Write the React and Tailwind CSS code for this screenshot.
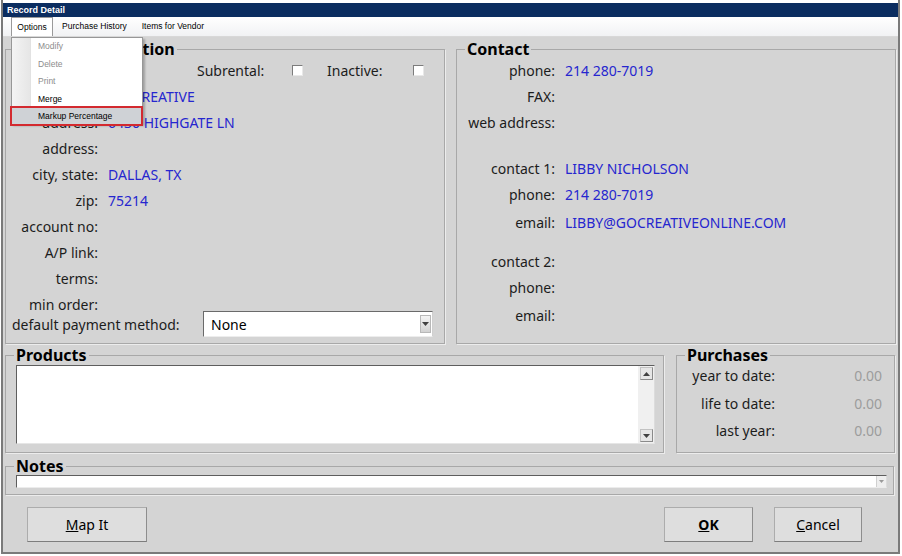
import React from 'react';

const blue = 'text-[#2626cf]';

const Check = () => (
  <span className="inline-block w-[11px] h-[11px] bg-white border border-t-[#7c7c7c] border-l-[#7c7c7c] border-r-[#e8e8e8] border-b-[#e8e8e8]" />
);

const LeftRow = ({ label, value }) => (
  <div className="flex h-[26px] items-center">
    <div className="w-[92px] text-right whitespace-nowrap">{label}</div>
    <div className={`ml-[10px] whitespace-nowrap ${blue}`}>{value}</div>
  </div>
);

const ContactRow = ({ label, value, h = 'h-[26px]', extra = '' }) => (
  <div className={`flex items-center ${h} ${extra}`}>
    <div className="w-[98px] text-right whitespace-nowrap">{label}</div>
    <div className={`ml-[10px] whitespace-nowrap ${blue}`}>{value}</div>
  </div>
);

const Group = ({ title, className, children }) => (
  <fieldset className={`border border-[#a8a8a8] shadow-[1px_1px_0_#ececec] ${className}`}>
    <legend className="ml-[8px] px-[2px] text-[16px] leading-[22px] font-bold text-black">{title}</legend>
    {children}
  </fieldset>
);

const Arrow = ({ down }) => (
  <svg width="7" height="4" viewBox="0 0 7 4">
    <path d={down ? 'M0 0h7L3.5 4z' : 'M0 4h7L3.5 0z'} fill="#404040" />
  </svg>
);

const Button = ({ children, className = '' }) => (
  <button className={`h-[35px] bg-[#dedede] border border-[#acacac] border-b-[#7d7d7d] border-r-[#8d8d8d] text-[14px] text-black ${className}`}>
    {children}
  </button>
);

export default function App() {
  return (
    <div className="relative w-[902px] h-[556px] bg-white overflow-hidden font-['Noto_Sans',sans-serif] text-[14px] text-[#1c1c1c]">
      <div className="ml-[1px] w-[899px] h-[554px] flex flex-col pt-[3px] border-x-2 border-b-2 border-[#7a7a7a]">
        {/* Title bar */}
        <div className="h-[14px] bg-[#0b2d60] flex items-center pl-[4px] text-white text-[9px] font-bold font-['Liberation_Sans',sans-serif] leading-none">
          Record Detail
        </div>

        {/* Menu bar */}
        <div className="h-[20px] bg-gradient-to-b from-white to-[#f1f2f4] border-b border-[#d8d8d8] flex items-stretch font-['Liberation_Sans',sans-serif] text-[8.5px] text-black">
          <div className="ml-[8px] w-[42px] bg-white border-x border-t border-[#9a9a9a] flex items-center justify-center">Options</div>
          <div className="ml-[9px] flex items-center">Purchase History</div>
          <div className="ml-[15px] flex items-center">Items for Vendor</div>
        </div>

        {/* Body */}
        <div className="flex-1 bg-[#d4d4d4] flex flex-col">
          <div className="flex mt-[1px]">
            <Group title="Vendor Information" className="ml-[2px] w-[440px] h-[306px]">
              <div className="-mt-[3px]">
                <div className="flex h-[26px] items-center">
                  <span className="ml-[191px] w-[95px]">Subrental:</span>
                  <Check />
                  <span className="ml-[24px] w-[86px]">Inactive:</span>
                  <Check />
                </div>
                <LeftRow label="name:" value="GO CREATIVE" />
                <LeftRow label="address:" value="6430 HIGHGATE LN" />
                <LeftRow label="address:" value="" />
                <LeftRow label="city, state:" value="DALLAS, TX" />
                <LeftRow label="zip:" value="75214" />
                <LeftRow label="account no:" value="" />
                <LeftRow label="A/P link:" value="" />
                <LeftRow label="terms:" value="" />
                <LeftRow label="min order:" value="" />
                <div className="flex h-[26px] items-center -mt-[6px]">
                  <span className="ml-[6px] w-[191px] whitespace-nowrap">default payment method:</span>
                  <div className="w-[230px] h-[26px] bg-white border border-t-[#6a6a6a] border-l-[#6a6a6a] border-r-[#cfcfcf] border-b-[#ededed] flex items-center">
                    <span className="ml-[7px] flex-1 text-black">None</span>
                    <div className="w-[11px] h-[18px] mr-[1px] bg-gradient-to-b from-[#f4f4f4] to-[#d2d2d2] border border-[#b8b8b8] flex items-center justify-center">
                      <Arrow down />
                    </div>
                  </div>
                </div>
              </div>
            </Group>

            <Group title="Contact" className="ml-[11px] w-[440px] h-[306px]">
              <div className="-mt-[3px]">
                <ContactRow label="phone:" value="214 280-7019" />
                <ContactRow label="FAX:" value="" />
                <ContactRow label="web address:" value="" />
                <ContactRow label="contact 1:" value="LIBBY NICHOLSON" extra="mt-[20px]" />
                <ContactRow label="phone:" value="214 280-7019" h="h-[27px]" />
                <ContactRow label="email:" value="LIBBY@GOCREATIVEONLINE.COM" h="h-[28px]" />
                <ContactRow label="contact 2:" value="" extra="mt-[12px]" />
                <ContactRow label="phone:" value="" h="h-[27px]" />
                <ContactRow label="email:" value="" h="h-[29px]" />
              </div>
            </Group>
          </div>

          <div className="flex">
            <Group title="Products" className="ml-[2px] w-[659px] h-[109px]">
              <div className="-mt-[1px] ml-[10px] w-[639px] h-[79px] bg-white border border-t-[#5e5e5e] border-l-[#5e5e5e] border-r-[#dcdcdc] border-b-[#e6e6e6] flex justify-end">
                <div className="w-[16px] h-full bg-[#f0f0f0] flex flex-col justify-between items-center py-[1px]">
                  <div className="w-[13px] h-[13px] bg-[#e6e6e6] border border-[#c2c2c2] border-b-[#8a8a8a] border-r-[#8a8a8a] flex items-center justify-center"><Arrow /></div>
                  <div className="w-[13px] h-[13px] bg-[#e6e6e6] border border-[#c2c2c2] border-b-[#8a8a8a] border-r-[#8a8a8a] flex items-center justify-center"><Arrow down /></div>
                </div>
              </div>
            </Group>
            <Group title="Purchases" className="ml-[12px] w-[219px] h-[109px]">
              <div className="-mt-[5px]">
                {[
                  ['year to date:', 'h-[28px]'],
                  ['life to date:', 'h-[28px]'],
                  ['last year:', 'h-[26px]'],
                ].map(([l, h]) => (
                  <div key={l} className={`flex items-center ${h}`}>
                    <div className="w-[98px] text-right">{l}</div>
                    <div className="flex-1 text-right pr-[12px] text-[#9c9c9c]">0.00</div>
                  </div>
                ))}
              </div>
            </Group>
          </div>

          <Group title="Notes" className="ml-[2px] mt-[2px] w-[889px] h-[40px]">
            <div className="-mt-[2px] ml-[10px] w-[871px] h-[13px] bg-white border border-t-[#5e5e5e] border-l-[#5e5e5e] border-r-[#dcdcdc] border-b-[#ececec] flex justify-end">
              <div className="w-[10px] h-full bg-[#eeeeee] border-l border-[#d0d0d0] flex items-center justify-center">
                <svg width="5" height="3" viewBox="0 0 5 3"><path d="M0 0h5L2.5 3z" fill="#9a9a9a" /></svg>
              </div>
            </div>
          </Group>

          <div className="flex mt-[12px]">
            <Button className="ml-[24px] w-[120px]"><span className="underline">M</span>ap It</Button>
            <Button className="ml-[517px] w-[89px] font-bold border-[#3a3a3a] border-b-[#3a3a3a] border-r-[#3a3a3a]"><span className="underline">O</span>K</Button>
            <Button className="ml-[21px] w-[88px]"><span className="underline">C</span>ancel</Button>
          </div>
        </div>
      </div>

      {/* Options dropdown menu */}
      <div className="absolute left-[11px] top-[37px] w-[132px] h-[87px] bg-white border border-[#979797] shadow-[2px_2px_2px_rgba(0,0,0,0.25)] font-['Liberation_Sans',sans-serif] text-[8.5px] flex">
        <div className="w-[19px] h-full bg-gradient-to-r from-[#f4f4f4] to-[#e6e6e6] border-r border-[#e2e2e2]" />
        <div className="flex-1 flex flex-col">
          <div className="h-[17.5px] flex items-center pl-[7px] text-[#8d8d8d]">Modify</div>
          <div className="h-[17.5px] flex items-center pl-[7px] text-[#8d8d8d]">Delete</div>
          <div className="h-[17.5px] flex items-center pl-[7px] text-[#8d8d8d]">Print</div>
          <div className="h-[17.5px] flex items-center pl-[7px] text-black">Merge</div>
        </div>
      </div>
      <div className="absolute left-[10px] top-[106px] w-[133px] h-[20px] border-2 border-[#d32a2f] bg-[#cfd2d6] flex items-center pl-[26px] font-['Liberation_Sans',sans-serif] text-[8.5px] text-black">
        Markup Percentage
      </div>
    </div>
  );
}
